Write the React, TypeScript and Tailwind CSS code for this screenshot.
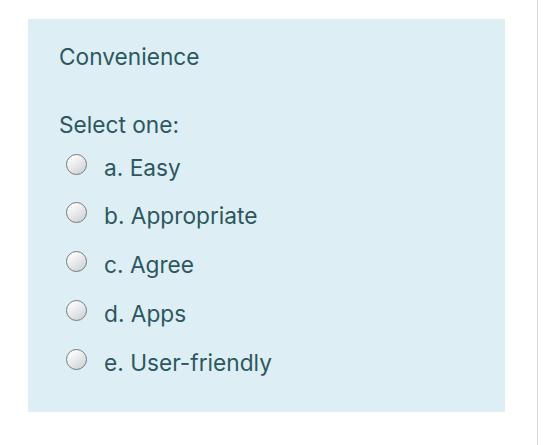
import React from "react";

const options = ["a. Easy", "b. Appropriate", "c. Agree", "d. Apps", "e. User-friendly"];

function Radio() {
  return (
    <span className="ml-[7px] h-[21px] w-[21px] shrink-0 rounded-full border-[1.5px] border-[#757a7d] bg-[linear-gradient(145deg,#ffffff_10%,#cdd1d4_95%)]" />
  );
}

export default function App() {
  return (
    <div className="h-[445px] w-[560px] bg-white" style={{ fontFamily: 'Inter, "Liberation Sans", Arial, sans-serif' }}>
      <div className="h-[445px] w-[538px] border-r border-[#dadada] pl-[28px] pt-[19px]">
        <div className="flex h-[393px] w-[477px] flex-col bg-[#ddeff5] pl-[31px] pt-[23.5px] text-[22.7px] leading-[28px] text-[#2d5760]">
          <div>Convenience</div>
          <div className="mt-[40px]">Select one:</div>
          <div className="mt-[15px] flex flex-col gap-[20.75px]">
            {options.map((o) => (
              <div key={o} className="flex items-start gap-[17px]">
                <Radio />
                <span>{o}</span>
              </div>
            ))}
          </div>
        </div>
      </div>
    </div>
  );
}
